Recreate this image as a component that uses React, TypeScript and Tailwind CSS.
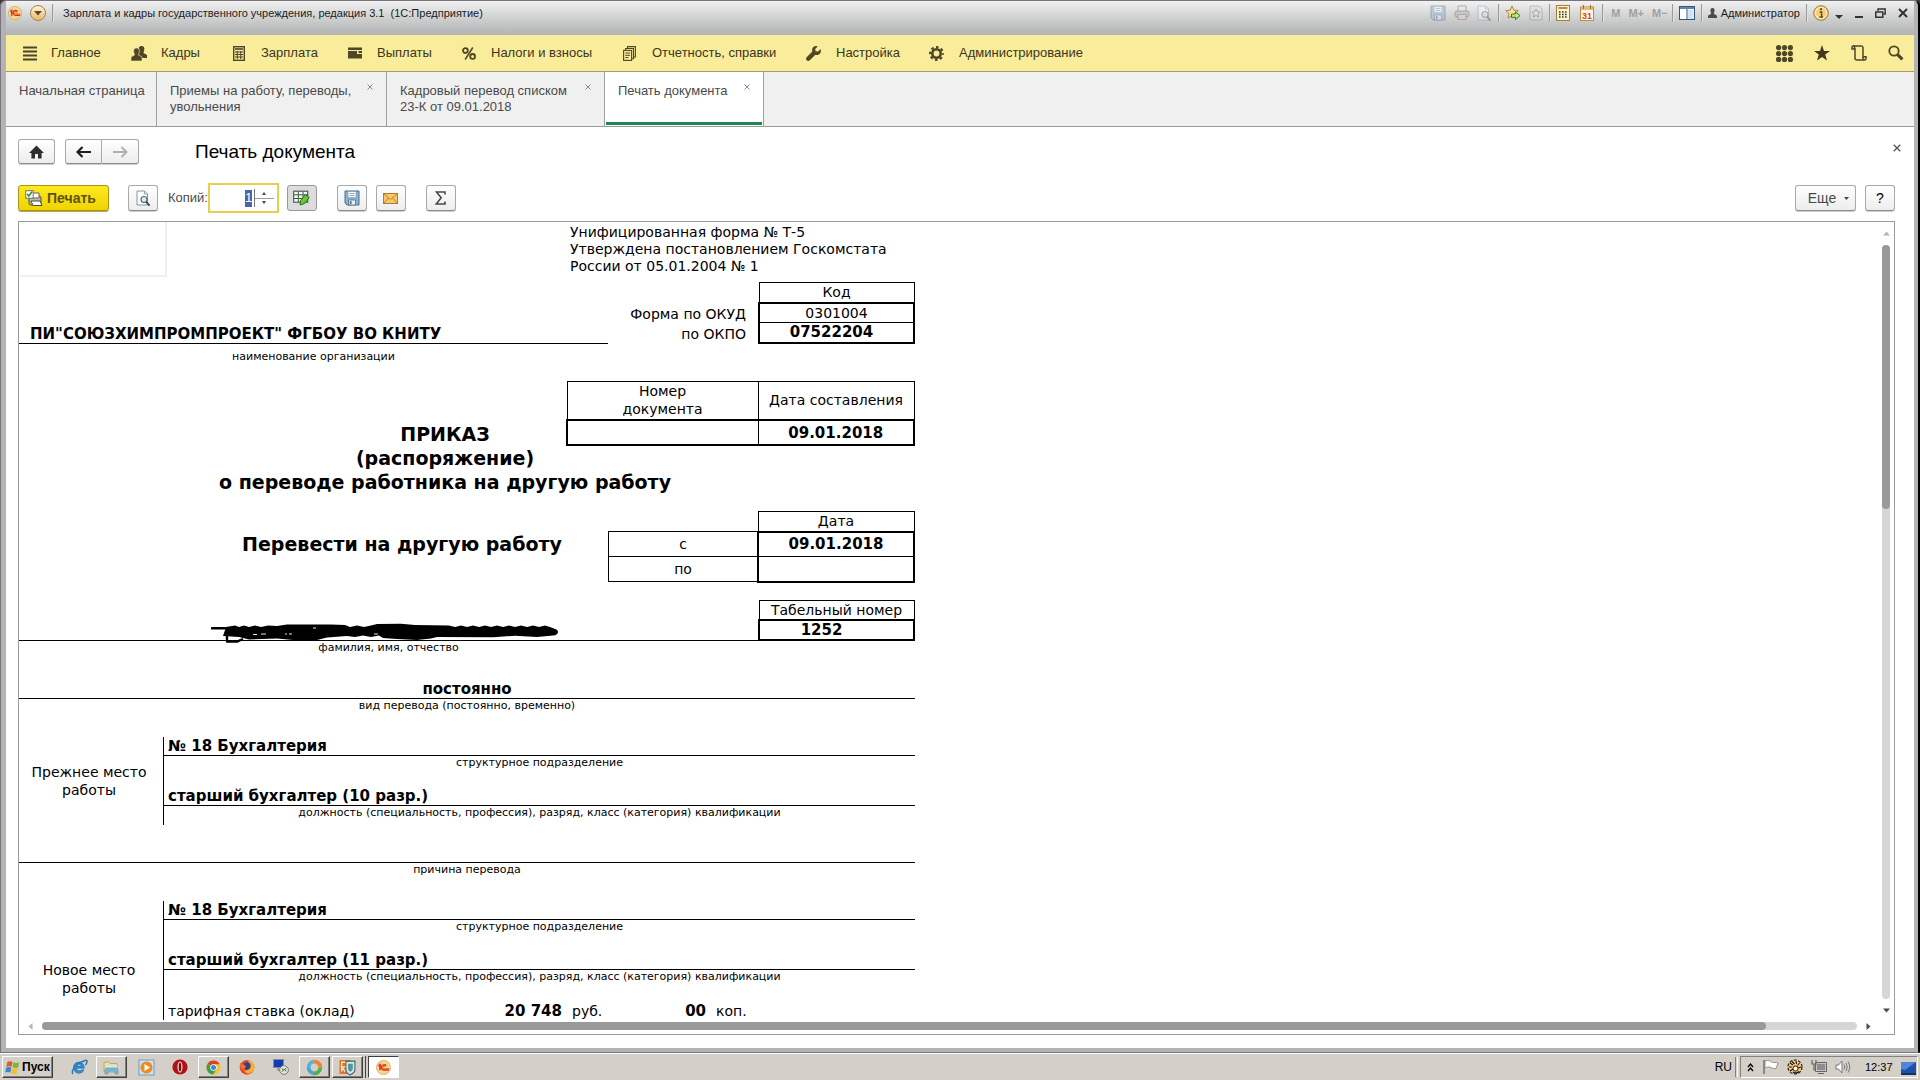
import React, { ReactNode } from "react";

const UI = "font-['Liberation_Sans',Arial,sans-serif]";
const DOC = "font-['DejaVu_Sans',Verdana,sans-serif]";

/* ---------- title bar ---------- */

function Logo1C({ size = 16 }: { size?: number }) {
  return (
    <svg width={size} height={size} viewBox="0 0 16 16" aria-hidden="true">
      <circle cx="8" cy="8" r="7.5" fill="#f8d68a" stroke="#c9a860" strokeWidth="0.8" />
      <path d="M2.600 6.400 L4.300 5.200 V11" stroke="#d2341c" strokeWidth="1.700" fill="none" />
      <path d="M10.800 6.400 A2.700 2.700 0 1 0 9 10.600 H14" stroke="#d2341c" strokeWidth="1.500" fill="none" />
      <path d="M9.800 7.600 A1.200 1.200 0 1 0 9 9.100 H14" stroke="#d2341c" strokeWidth="0.700" fill="none" />
    </svg>
  );
}

function Divider() {
  return <span className="h-[18px] w-px shrink-0 bg-[#9a9a9a] shadow-[1px_0_0_#e4e4e4]" />;
}

function FloppyIcon({ faded = false }: { faded?: boolean }) {
  return (
    <svg width="16" height="16" viewBox="0 0 16 16" opacity={faded ? 0.45 : 1} aria-hidden="true">
      <path d="M1 1 H15 V15 H3 L1 13 Z" fill="#8fb0cc" stroke="#4c6f90" />
      <rect x="4" y="1.5" width="8" height="6" fill="#fff" stroke="#7593ad" strokeWidth="0.6" />
      <path d="M5.5 3.5 H10.5 M5.5 5.5 H10.5" stroke="#6d93b5" strokeWidth="0.8" />
      <rect x="4.5" y="10" width="7" height="5" fill="#e9f0f4" stroke="#4c6f90" strokeWidth="0.8" />
      <rect x="5.8" y="11.2" width="1.8" height="3" fill="#4c6f90" />
    </svg>
  );
}

function PreviewIcon({ faded = false }: { faded?: boolean }) {
  return (
    <svg width="16" height="17" viewBox="0 0 16 17" opacity={faded ? 0.4 : 1} aria-hidden="true">
      <path d="M2 1 H9.5 L12.5 4 V15 H2 Z" fill="#fcfdfd" stroke="#7f98a6" />
      <path d="M9.5 1 V4 H12.5" fill="none" stroke="#7f98a6" strokeWidth="0.8" />
      <circle cx="9" cy="9.5" r="3" fill="#dceaf2" stroke="#56646c" strokeWidth="1.1" />
      <path d="M11.2 11.8 L14.6 15.6" stroke="#4a4a42" strokeWidth="2" />
    </svg>
  );
}

function TitleBar() {
  return (
    <header className="flex h-[34px] shrink-0 items-start bg-gradient-to-b from-[#f2f2f2] via-[#cfd0d0] to-[#b0b3b4] pt-0.5 text-[11px] text-[#1c1c1c]">
      <div className="flex h-5 w-full items-center pl-0.5 pr-1.5">
        <Logo1C size={14} />
        <button aria-label="Меню" className="ml-2 mr-1.5 flex size-4 items-center justify-center rounded-full border border-[#a8834a] bg-gradient-to-b from-[#fff3d5] to-[#e9b869]">
          <svg width="8" height="5" viewBox="0 0 8 5"><path d="M0 0 H8 L4 4.5 Z" fill="#5b4a32" /></svg>
        </button>
        <Divider />
        <h1 className="ml-2.5 whitespace-pre">Зарплата и кадры государственного учреждения, редакция 3.1  (1С:Предприятие)</h1>
        <div className="ml-auto flex items-center">
          <button aria-label="Сохранить" className="mr-2"><FloppyIcon faded /></button>
          <button aria-label="Печать" className="mr-1.5">
            <svg width="16" height="16" viewBox="0 0 16 16" opacity="0.45">
              <path d="M4 6 V1 H12 V6" fill="#eee" stroke="#666" />
              <rect x="1" y="6" width="14" height="6" rx="2" fill="#b5b5b5" stroke="#666" />
              <rect x="4" y="9.5" width="8" height="5" fill="#f1c9c9" stroke="#777" />
            </svg>
          </button>
          <button aria-label="Просмотр" className="mr-1.5"><PreviewIcon faded /></button>
          <Divider />
          <button aria-label="Добавить в избранное" className="ml-1.5 mr-2">
            <svg width="16" height="16" viewBox="0 0 16 16">
              <path d="M7 1 L8.8 5.2 L13.3 5.6 L9.9 8.6 L11 13 L7 10.7 L3 13 L4 8.6 L.7 5.6 L5.2 5.2 Z" fill="#f7e2a6" stroke="#b38538" />
              <path d="M6.5 9 H10.5 V6.8 L15 10.6 L10.5 14.6 V12.3 H6.5 Z" fill="#b9ea7e" stroke="#2f8017" />
            </svg>
          </button>
          <button aria-label="Избранное" className="mr-1.5">
            <svg width="14" height="16" viewBox="0 0 14 16" opacity="0.45">
              <path d="M1 1 H10 L13 4 V15 H1 Z" fill="#ddd" stroke="#888" />
              <path d="M7 4 L8.2 6.8 L11 7 L8.9 9 L9.5 12 L7 10.4 L4.5 12 L5.1 9 L3 7 L5.8 6.8 Z" fill="#f3f3f3" stroke="#666" />
            </svg>
          </button>
          <Divider />
          <button aria-label="Калькулятор" className="ml-1.5 mr-2.5">
            <svg width="14" height="16" viewBox="0 0 14 16">
              <rect x="0.5" y="0.5" width="13" height="15" fill="#fdf3cf" stroke="#a3803c" />
              <rect x="2.5" y="2" width="9" height="2" fill="#b98b3d" />
              <path d="M3 7 H11 M3 9.5 H11 M3 12 H11" stroke="#3d3420" strokeWidth="1.4" strokeDasharray="1.6 1.4" />
            </svg>
          </button>
          <button aria-label="Календарь" className="mr-2">
            <svg width="14" height="16" viewBox="0 0 14 16">
              <rect x="0.5" y="2" width="13" height="13.5" fill="#fff7e8" stroke="#bd8a4a" />
              <rect x="1" y="2" width="12" height="3" fill="#e9b978" />
              <path d="M3.5 0 V4 M10.5 0 V4" stroke="#9a6b33" />
              <text x="7" y="13.6" textAnchor="middle" fontSize="9" fontWeight="700" fill="#d14a1c" fontFamily="Liberation Sans">31</text>
            </svg>
          </button>
          <Divider />
          <span className="ml-2 mr-1 flex gap-2 font-bold text-[#a1a1a1]">
            <button>M</button><button>M+</button><button>M−</button>
          </span>
          <Divider />
          <button aria-label="Панели" className="mx-1.5">
            <svg width="16" height="14" viewBox="0 0 16 14">
              <rect x="0.5" y="0.5" width="15" height="13" fill="#fff" stroke="#33577c" />
              <rect x="1" y="1" width="14" height="2" fill="#5f86ae" />
              <path d="M8 3 V13" stroke="#33577c" />
              <rect x="9" y="4" width="5.5" height="9" fill="#d5e3f0" />
            </svg>
          </button>
          <Divider />
          <button className="ml-1.5 mr-1.5 flex items-center gap-1">
            <svg width="9" height="10" viewBox="0 0 10 11"><path d="M5 0 C7 0 7.600 1.500 7.200 3.500 C7 5 6.500 5.500 6.500 6.200 L10 8.500 V11 H0 V8.500 L3.500 6.200 C3.500 5.500 3 5 2.800 3.500 C2.400 1.500 3 0 5 0 Z" fill="#4b4b4b" /></svg>
            Администратор
          </button>
          <Divider />
          <button aria-label="Информация" className="ml-1.5 flex items-center gap-1.5">
            <svg width="16" height="16" viewBox="0 0 16 16">
              <circle cx="8" cy="8" r="7.3" fill="#f6cf79" stroke="#a07a3c" />
              <circle cx="8" cy="8" r="5.6" fill="none" stroke="#fdf0ce" />
              <path d="M6.6 7 H8.6 V12 M6.4 12 H10" stroke="#5b4a2a" strokeWidth="1.4" fill="none" />
              <circle cx="8" cy="4.2" r="1.1" fill="#5b4a2a" />
            </svg>
            <svg className="mt-2" width="8" height="4" viewBox="0 0 8 4"><path d="M0 0 H8 L4 4 Z" fill="#333" /></svg>
          </button>
          <span className="ml-1"><Divider /></span>
          <button aria-label="Свернуть" className="ml-2">
            <svg width="8" height="12" viewBox="0 0 8 12"><path d="M0 10 H8" stroke="#333" strokeWidth="2" /></svg>
          </button>
          <button aria-label="Восстановить" className="ml-3">
            <svg width="11" height="10" viewBox="0 0 11 10"><path d="M3 3 V1 H10.2 V6 H8.5" fill="none" stroke="#333" strokeWidth="1.4" /><path d="M0.8 4 H7.8 V9.2 H0.8 Z" fill="none" stroke="#333" strokeWidth="1.5" /></svg>
          </button>
          <button aria-label="Закрыть" className="ml-3">
            <svg width="10" height="10" viewBox="0 0 10 10"><path d="M1 1 L9 9 M9 1 L1 9" stroke="#333" strokeWidth="2" /></svg>
          </button>
        </div>
      </div>
    </header>
  );
}

/* ---------- section menu ---------- */

const INK = "#4d4726";

const sections: { label: string; width: string; gap: string; icon: ReactNode }[] = [
  {
    label: "Главное", width: "w-[108px]", gap: "gap-3.5",
    icon: <svg width="14" height="15" viewBox="0 0 14 15"><path d="M0 1.5 H14 M0 5.5 H14 M0 9.5 H14 M0 13.5 H14" stroke={INK} strokeWidth="2" /></svg>,
  },
  {
    label: "Кадры", width: "w-[102px]", gap: "gap-3.5",
    icon: (
      <svg width="16" height="15" viewBox="0 0 16 15">
        <path d="M10.5 0 C13 0 13.8 2 13.2 4.2 C13 5.5 12.5 6.2 12.5 7 L16 9 V12 H10 L7 8 C9 6 8 2 8 1 C9 .2 10 0 10.5 0 Z" fill={INK} />
        <path d="M5.5 2 C8 2 8.8 4 8.2 6.2 C8 7.5 7.5 8.2 7.5 9 L11 11 V15 H0 V11 L3.5 9 C3.5 8.2 3 7.5 2.8 6.2 C2.2 4 3 2 5.5 2 Z" fill={INK} stroke="#f9ec9b" strokeWidth="0.6" />
      </svg>
    ),
  },
  {
    label: "Зарплата", width: "w-[115px]", gap: "gap-4",
    icon: (
      <svg width="12" height="15" viewBox="0 0 12 15">
        <rect x="0.7" y="0.7" width="10.6" height="13.6" fill="none" stroke={INK} strokeWidth="1.4" />
        <path d="M2 3 H10" stroke={INK} strokeWidth="1.6" />
        <path d="M2 6 H10 M2 8.5 H10 M2 11 H10 M4.3 5 V13 M7.7 5 V13" stroke={INK} strokeWidth="1" />
      </svg>
    ),
  },
  {
    label: "Выплаты", width: "w-[114px]", gap: "gap-[15px]",
    icon: <svg width="14" height="12" viewBox="0 0 14 12"><path d="M0 0.5 H14 V3 H0 Z M0 4 H9 V7 H14 V11.5 H0 Z M10.5 4 H14 V6 H10.5 Z" fill={INK} /></svg>,
  },
  {
    label: "Налоги и взносы", width: "w-[161px]", gap: "gap-[15px]",
    icon: (
      <svg width="14" height="13" viewBox="0 0 14 13">
        <circle cx="3.4" cy="3.6" r="2.4" fill="none" stroke={INK} strokeWidth="1.8" />
        <circle cx="10.6" cy="9.4" r="2.4" fill="none" stroke={INK} strokeWidth="1.8" />
        <path d="M10.8 0.5 L3.2 12.5" stroke={INK} strokeWidth="1.5" />
      </svg>
    ),
  },
  {
    label: "Отчетность, справки", width: "w-[183px]", gap: "gap-4",
    icon: (
      <svg width="13" height="15" viewBox="0 0 13 15">
        <path d="M4.5 2.5 V0.6 H12.4 V11 H11 M2.6 4.4 V2.5 H10.5 V12.8 H9" fill="none" stroke={INK} strokeWidth="1.1" />
        <rect x="0.6" y="4.4" width="8" height="10" fill="none" stroke={INK} strokeWidth="1.1" />
        <path d="M2.3 7 H7 M2.3 9.3 H7 M2.3 11.6 H5.5" stroke={INK} />
      </svg>
    ),
  },
  {
    label: "Настройка", width: "w-[123px]", gap: "gap-[15px]",
    icon: <svg width="15" height="15" viewBox="0 0 15 15"><path d="M14.6 3.2 L12 5.6 L9.6 5.2 L9.2 3 L11.6 .4 C9.6 -.4 7.4 .4 6.5 2.2 C5.9 3.5 6 4.6 6.3 5.6 L.7 11.2 C-.2 12.1 -.2 13.5 .7 14.3 C1.6 15.2 3 15.1 3.8 14.3 L9.4 8.7 C10.9 9.2 12.7 8.9 13.8 7.7 C15 6.5 15.2 4.7 14.6 3.2 Z" fill={INK} /></svg>,
  },
  {
    label: "Администрирование", width: "w-[160px]", gap: "gap-[15px]",
    icon: (
      <svg width="15" height="15" viewBox="0 0 15 15">
        <circle cx="7.5" cy="7.5" r="4.2" fill="none" stroke={INK} strokeWidth="2.6" />
        <circle cx="7.5" cy="7.5" r="6.4" fill="none" stroke={INK} strokeWidth="2.2" strokeDasharray="2.6 2.43" strokeDashoffset="1.3" />
      </svg>
    ),
  },
];

function SectionMenu() {
  return (
    <nav className="flex h-[37px] shrink-0 items-center border-b border-[#a39d63] bg-[#f9ec9b] pl-[17px] pr-2.5 text-[13px] text-[#3b361e]">
      {sections.map((s) => (
        <a key={s.label} href="#" className={`${s.width} ${s.gap} flex shrink-0 items-center whitespace-nowrap`}>
          {s.icon}
          {s.label}
        </a>
      ))}
      <div className="ml-auto flex items-center gap-[21px]">
        <button aria-label="Все функции">
          <svg width="17" height="17" viewBox="0 0 17 17" fill={INK}>
            {[2.6, 8.5, 14.4].map((y) => [2.6, 8.5, 14.4].map((x) => <circle key={`${x}-${y}`} cx={x} cy={y} r="2.6" />))}
          </svg>
        </button>
        <button aria-label="Избранное">
          <svg width="16" height="16" viewBox="0 0 16 16"><path d="M8 0 L10 5.9 H16 L11.2 9.5 L13 15.6 L8 12 L3 15.6 L4.8 9.5 L0 5.9 H6 Z" fill="#40391c" /></svg>
        </button>
        <button aria-label="История">
          <svg width="16" height="16" viewBox="0 0 16 16" fill="none" stroke={INK} strokeWidth="1.5">
            <path d="M1 4 H3.6 V2.4 C3.6 .4 1 .4 1 2.4 Z M2.4 1 H10.5 C11.6 1 12 1.8 12 2.8 V11.8 H15 V13 C15 14.2 14.3 15 13.2 15 H6 C4.6 15 4 14.2 4 13 V3" />
            <path d="M12 11.8 V13.3 C12 14.2 12.5 15 13.3 15" />
          </svg>
        </button>
        <button aria-label="Поиск">
          <svg width="16" height="16" viewBox="0 0 16 16"><circle cx="6" cy="6" r="4.7" fill="none" stroke={INK} strokeWidth="1.8" /><path d="M9.4 9.4 L14.4 14.4" stroke={INK} strokeWidth="3" /></svg>
        </button>
      </div>
    </nav>
  );
}

/* ---------- tabs ---------- */

function Tab({ lines, width, active, closable = true }: { lines: string[]; width: string; active?: boolean; closable?: boolean }) {
  return (
    <div className={`${width} ${active ? "bg-white" : ""} flex shrink-0 flex-col border-r border-[#a0a0a0] px-px`}>
      <div className="flex flex-1 items-start justify-between pl-3 pr-3 pt-[11px]">
        <a href="#" className="whitespace-nowrap leading-4">
          {lines.map((l) => <span key={l} className="block">{l}</span>)}
        </a>
        {closable && (
          <button aria-label="Закрыть вкладку" className="py-px">
            <svg width="6" height="6" viewBox="0 0 6 6"><path d="M0.5 0.5 L5.5 5.5 M5.5 0.5 L0.5 5.5" stroke="#8c8c8c" /></svg>
          </button>
        )}
      </div>
      {active && <span className="mb-px h-[3px] bg-[#1f8552]" />}
    </div>
  );
}

function TabBar() {
  return (
    <div className="flex h-[55px] shrink-0 border-b border-[#9b9b9b] bg-[#f0f0f0] text-[13px] text-[#4a4a4a]">
      <Tab width="w-[151px]" lines={["Начальная страница"]} closable={false} />
      <Tab width="w-[230px]" lines={["Приемы на работу, переводы,", "увольнения"]} />
      <Tab width="w-[218px]" lines={["Кадровый перевод списком", "23-К от 09.01.2018"]} />
      <Tab width="w-[159px]" lines={["Печать документа"]} active />
    </div>
  );
}

/* ---------- page header and toolbar ---------- */

const BTN = "flex items-center justify-center rounded-[3px] border border-[#a9a9a9] border-b-[#8c8c8c] bg-gradient-to-b from-white to-[#ededed] shadow-[0_1px_0_#cfcfcf]";

function PageHeader() {
  return (
    <div className="flex items-center pl-3 pr-[13px] pt-3">
      <button aria-label="Домой" className={`${BTN} h-[25px] w-[37px]`}>
        <svg width="15" height="14" viewBox="0 0 15 14"><path d="M7.5 0.5 L15 8 H12.6 V13.5 H9 V9 H6 V13.5 H2.4 V8 H0 Z" fill="#2e2e2e" /></svg>
      </button>
      <div className="ml-2.5 flex">
        <button aria-label="Назад" className={`${BTN} h-[25px] w-[37px] rounded-r-none`}>
          <svg width="15" height="12" viewBox="0 0 15 12"><path d="M6.5 1 L1.5 6 L6.5 11 M2 6 H15" fill="none" stroke="#1d1d1d" strokeWidth="2.2" /></svg>
        </button>
        <button aria-label="Вперед" className={`${BTN} h-[25px] w-[37px] rounded-l-none border-l-0`}>
          <svg width="15" height="12" viewBox="0 0 15 12"><path d="M8.5 1 L13.5 6 L8.5 11 M13 6 H0" fill="none" stroke="#b0b0b0" strokeWidth="2" /></svg>
        </button>
      </div>
      <h2 className="ml-14 text-[19px] leading-6 text-black">Печать документа</h2>
      <button aria-label="Закрыть" className="mb-2 ml-auto">
        <svg width="8" height="8" viewBox="0 0 8 8"><path d="M0.7 0.7 L7.3 7.3 M7.3 0.7 L0.7 7.3" stroke="#555" strokeWidth="1.3" /></svg>
      </button>
    </div>
  );
}

function Toolbar() {
  return (
    <div className="mb-2 mt-[19px] flex h-[30px] items-center pl-3 pr-[19px] text-[13px] text-[#4a4a4a]">
      <button className="flex h-[26px] w-[91px] items-center gap-1 rounded-[3px] border border-[#a5931f] bg-gradient-to-b from-[#ffe81c] to-[#eed400] pl-1.5 text-[14px] font-bold text-[#5d5212] shadow-[0_1px_0_#b9a93c]">
        <svg width="18" height="17" viewBox="0 0 18 17" aria-hidden="true">
          <rect x="4" y="6" width="12" height="9" rx="2" fill="#bdb9aa" stroke="#4d4d42" />
          <path d="M7 3 H14 V8 H7 Z" fill="#fff" stroke="#66665a" />
          <path d="M6 11 H15 L17 15.5 H8 Z" fill="#fff" stroke="#4d4d42" />
          <rect x="0.7" y="0.7" width="7.500" height="7.500" fill="#fff" stroke="#66766a" />
          <path d="M2 4 L3.8 6 L7 1.8" fill="none" stroke="#2e8b2e" strokeWidth="1.5" />
        </svg>
        Печать
      </button>
      <button aria-label="Предварительный просмотр" className={`${BTN} ml-[19px] h-[26px] w-[30px]`}><PreviewIcon /></button>
      <label htmlFor="copies" className="ml-2.5">Копий:</label>
      <div className="flex h-[30px] w-[71px] border-2 border-[#e6cf4c] bg-white">
        <div className="flex flex-1 items-center justify-end">
          <input id="copies" defaultValue="1" className="h-[17px] w-[7px] bg-[#4a66a8] text-right text-[13px] text-white outline-none" />
        </div>
        <div className="my-1 ml-0.5 mr-[3px] flex w-5 flex-col border-l border-[#777]">
          <button aria-label="Больше" className="flex flex-1 items-center justify-center border-b border-[#999]"><svg width="4" height="3" viewBox="0 0 4 3"><path d="M0 3 L2 0 L4 3 Z" fill="#444" /></svg></button>
          <button aria-label="Меньше" className="flex flex-1 items-center justify-center"><svg width="4" height="3" viewBox="0 0 4 3"><path d="M0 0 L2 3 L4 0 Z" fill="#444" /></svg></button>
        </div>
      </div>
      <button aria-label="Редактирование" className="ml-2 flex h-[26px] w-[30px] items-center justify-center rounded-[3px] border border-[#999] bg-[#dcdcdc]">
        <svg width="17" height="16" viewBox="0 0 17 16">
          <rect x="0.7" y="1.2" width="14" height="11" fill="#f4faf4" stroke="#3c5a40" strokeWidth="1.1" />
          <path d="M1 4.8 H15 M1 8.5 H15 M5.3 1.5 V12 M10 1.5 V12" stroke="#3c5a40" />
          <path d="M7 14.800 L7.500 10.500 L12.500 4.500 L16.300 7.500 L11.200 13.800 Z" fill="#6cc63c" stroke="#2a6f1a" />
        </svg>
      </button>
      <button aria-label="Сохранить" className={`${BTN} ml-5 h-[26px] w-[30px]`}><FloppyIcon /></button>
      <button aria-label="Отправить по почте" className={`${BTN} ml-[9px] h-[26px] w-[30px]`}>
        <svg width="15" height="11" viewBox="0 0 15 11">
          <rect x="0.5" y="0.5" width="14" height="10" fill="#f8c866" stroke="#b5792a" />
          <path d="M1 1 L7.5 6.5 L14 1 M1 10 L5.5 5 M14 10 L9.5 5" fill="none" stroke="#b5792a" strokeWidth="0.9" />
        </svg>
      </button>
      <button aria-label="Сумма" className={`${BTN} ml-5 h-[26px] w-[30px]`}>
        <svg width="11" height="14" viewBox="0 0 11 14"><path d="M10 3.5 V1 H1.5 L6.2 6.8 L1.2 13 H10 V10.5" fill="none" stroke="#4a4a4a" strokeWidth="1.6" /></svg>
      </button>
      <button className={`${BTN} ml-auto h-[26px] w-[61px] gap-2 pl-1.5 text-[14px]`}>
        Еще
        <svg width="5" height="3" viewBox="0 0 5 3"><path d="M0 0 H5 L2.5 3 Z" fill="#444" /></svg>
      </button>
      <button className={`${BTN} ml-[9px] h-[26px] w-[30px] text-[14px] text-black`}>?</button>
    </div>
  );
}

/* ---------- printed form ---------- */

const BOX = "border border-black p-0 text-center align-middle leading-[18px]";
const HEAD = `${BOX} font-normal`;
const VALUE = `${BOX} text-[15px] font-bold`;
const CAPTION = "text-center text-[11px] leading-[14px]";

function CodeTable() {
  return (
    <table className="h-[61px] w-[157px] border-collapse">
      <thead><tr><th className={`${HEAD} h-5`}>Код</th></tr></thead>
      <tbody className="border-2 border-black">
        <tr><td className={`${HEAD} h-5`}>0301004</td></tr>
        <tr><td className={`${VALUE} h-5 pr-2.5`}>07522204</td></tr>
      </tbody>
    </table>
  );
}

function NumberTable() {
  return (
    <table className="h-[65px] w-[349px] border-collapse">
      <thead>
        <tr>
          <th className={`${HEAD} h-[39px]`}>Номер<br />документа</th>
          <th className={`${HEAD} w-[156px]`}>Дата составления</th>
        </tr>
      </thead>
      <tbody className="border-2 border-black">
        <tr>
          <td className={`${VALUE} h-[25px]`} />
          <td className={VALUE}>09.01.2018</td>
        </tr>
      </tbody>
    </table>
  );
}

function PeriodTable() {
  return (
    <table className="h-[70px] w-[307px] border-collapse">
      <thead>
        <tr>
          <td className="h-5 p-0" />
          <th className={`${HEAD} w-[156px]`}>Дата</th>
        </tr>
      </thead>
      <tbody>
        <tr>
          <th className={`${HEAD} h-[25px]`}>с</th>
          <td className={`${VALUE} border-x-2 border-t-2`}>09.01.2018</td>
        </tr>
        <tr>
          <th className={`${HEAD} h-[25px]`}>по</th>
          <td className={`${VALUE} border-x-2 border-b-2`} />
        </tr>
      </tbody>
    </table>
  );
}

function StaffNumberTable() {
  return (
    <table className="h-[41px] w-[157px] border-collapse">
      <thead><tr><th className={`${HEAD} h-5`}>Табельный номер</th></tr></thead>
      <tbody className="border-2 border-black">
        <tr><td className={`${VALUE} h-5 pr-[30px]`}>1252</td></tr>
      </tbody>
    </table>
  );
}

function Workplace({ title, unit, post, height, children }: { title: string[]; unit: string; post: string; height: string; children?: ReactNode }) {
  return (
    <section className={`${height} flex`}>
      <h3 className="flex w-[144px] flex-col justify-center pr-1 text-center leading-[18px]">
        {title.map((t) => <span key={t}>{t}</span>)}
      </h3>
      <div className="flex-1 border-l border-black">
        <p className="flex h-[19px] items-end border-b border-black pl-1 text-[15px] font-bold leading-[17px]">{unit}</p>
        <p className={`${CAPTION} h-6`}>структурное подразделение</p>
        <p className="flex h-[26px] items-end border-b border-black pl-1 text-[15px] font-bold leading-[17px]">{post}</p>
        <p className={CAPTION}>должность (специальность, профессия), разряд, класс (категория) квалификации</p>
        {children}
      </div>
    </section>
  );
}

function Scribble() {
  return (
    <svg className="-mb-1 ml-[192px]" width="350" height="21" viewBox="0 0 350 21" role="img" aria-label="Имя закрашено">
      <path d="M1 5.2 H14" stroke="#000" strokeWidth="2.6" strokeLinecap="round" />
      <path
        d="M12 13 L15 4 L24 2.5 L28 4 L33 2.5 L38 4 L44 2.5 L50 4 L57 2.4 L66 3 L76 1.6 L120 1.4 L134 2 L139 4 L146 2.6 L153 4 L160 2.6 L166 1 L190 .8 L204 2 L238 2.4 L244 4 L250 2.4 L256 4 L262 2.4 L268 4 L274 2.4 L280 4 L286 2.4 L292 4 L298 2.4 L304 4 L310 2.4 L316 4 L322 2.4 L328 4 L334 2.4 L339 4 L343 5.4 C349 7 348 12 342 12.6 L326 14 L304 12.8 L282 14.2 L226 14 L220 15.6 L206 17 L186 16 L172 15 L168 12.4 L160 14 L152 12.4 L144 14 L136 13 L116 14.5 L106 17 L82 17 L66 15.5 L38 16.4 L28 14 Z"
        fill="#000"
      />
      <path d="M16 13 V18.600 H26 L32 16" fill="none" stroke="#000" strokeWidth="2.400" strokeLinejoin="round" />
      <path d="M42 11.500 H46 M50 11 H55 M74 11 H76 M78 11 H81 M102 5 H105 M163 11 H167" stroke="#fff" strokeWidth="0.900" />
    </svg>
  );
}

function PrintedForm() {
  return (
    <article className={`${DOC} w-[896px] text-[14px] text-black`}>
      <div className="flex h-[60px]">
        <div className="h-[55px] w-[148px] border-b-2 border-r-2 border-[#efefef]" />
        <p className="ml-[403px] pt-0.5 leading-[17px]">
          Унифицированная форма № Т-5<br />Утверждена постановлением Госкомстата<br />России от 05.01.2004 № 1
        </p>
      </div>

      <div className="flex">
        <p className="flex w-[589px] items-end border-b border-black pl-[11px] text-[15px] font-bold leading-[18px]">
          ПИ"СОЮЗХИМПРОМПРОЕКТ" ФГБОУ ВО КНИТУ
        </p>
        <div className="flex flex-1 flex-col justify-end pr-3 text-right leading-5">
          <p>Форма по ОКУД</p>
          <p>по ОКПО</p>
        </div>
        <CodeTable />
      </div>
      <p className={`${CAPTION} h-[37px] w-[589px] pt-1.5`}>наименование организации</p>

      <div className="flex">
        <div className="flex w-[547px] items-end pl-[305px]">
          <h2 className="flex-1 text-center text-[19px] font-bold leading-6">ПРИКАЗ</h2>
        </div>
        <NumberTable />
      </div>
      <h2 className="mb-[17px] w-[852px] text-center text-[19px] font-bold leading-6">
        (распоряжение)<br />о переводе работника на другую работу
      </h2>

      <div className="flex">
        <h2 className="w-[589px] pl-[177px] pt-5 text-center text-[19px] font-bold leading-[26px]">Перевести на другую работу</h2>
        <PeriodTable />
      </div>

      <div className="mt-[17px] flex">
        <div className="flex w-[739px] items-end border-b border-black"><Scribble /></div>
        <StaffNumberTable />
      </div>
      <p className={`${CAPTION} w-[739px]`}>фамилия, имя, отчество</p>

      <p className="mt-[25px] border-b border-black text-center text-[15px] font-bold leading-[18px]">постоянно</p>
      <p className={`${CAPTION} mb-6`}>вид перевода (постоянно, временно)</p>

      <Workplace title={["Прежнее место", "работы"]} unit="№ 18 Бухгалтерия" post="старший бухгалтер (10 разр.)" height="h-[88px]" />

      <div className="h-[38px] border-b border-black" />
      <p className={`${CAPTION} mb-6`}>причина перевода</p>

      <Workplace title={["Новое место", "работы"]} unit="№ 18 Бухгалтерия" post="старший бухгалтер (11 разр.)" height="h-[156px]">
        <div className="mt-4 flex items-baseline pl-1 leading-[22px]">
          <span className="w-[304px]">тарифная ставка (оклад)</span>
          <b className="w-[90px] text-right text-[15px]">20 748</b>
          <span className="ml-2.5 w-[103px]">руб.</span>
          <b className="w-[31px] text-right text-[15px]">00</b>
          <span className="ml-2.5">коп.</span>
        </div>
      </Workplace>
    </article>
  );
}

function Arrow({ d, dim }: { d: string; dim?: boolean }) {
  return <svg width="7" height="7" viewBox="0 0 7 7" className="shrink-0"><path d={d} fill={dim ? "#b5b5b5" : "#4a4a4a"} /></svg>;
}

function DocumentPanel() {
  return (
    <main className="mb-[13px] ml-3 mr-[19px] flex min-h-0 flex-1 flex-col border border-[#9c9c9c] bg-white">
      <div className="flex min-h-0 flex-1">
        <div className="min-h-0 flex-1 overflow-hidden"><PrintedForm /></div>
        <div className="flex w-3.5 flex-col items-center pb-1.5 pr-0.5 pt-2">
          <Arrow d="M0 5.5 L3.5 1.5 L7 5.5 Z" dim />
          <div className="my-2 w-2 flex-1 rounded-full bg-[#d6d6d6]"><div className="h-[35%] rounded-full bg-[#999]" /></div>
          <Arrow d="M0 1.5 L3.5 5.5 L7 1.5 Z" />
        </div>
      </div>
      <div className="flex h-3.5 items-center pb-0.5 pl-2 pr-[22px]">
        <Arrow d="M5.5 0 L1.5 3.5 L5.5 7 Z" dim />
        <div className="mx-2 h-2 flex-1 rounded-full bg-[#d6d6d6]"><div className="h-2 w-[95%] rounded-full bg-[#999]" /></div>
        <Arrow d="M1.5 0 L5.5 3.5 L1.5 7 Z" />
      </div>
    </main>
  );
}

/* ---------- taskbar ---------- */

const RAISED = "border border-b-[#404040] border-l-white border-r-[#404040] border-t-white bg-[#d4d0c8] shadow-[inset_-1px_-1px_0_#808080]";

function TaskItem({ label, children, kind = "flat", className = "" }: { label: string; children: ReactNode; kind?: "flat" | "raised"; className?: string }) {
  return (
    <button aria-label={label} className={`${kind === "raised" ? `${RAISED} w-[31px]` : "w-5"} ${className} flex h-[22px] shrink-0 items-center justify-center`}>
      {children}
    </button>
  );
}

function Taskbar() {
  return (
    <footer className="flex h-[27px] shrink-0 items-center border-t border-white bg-[#d4d0c8] pl-0.5 pr-0.5 text-[12px] text-black">
      <button className={`${RAISED} flex h-[22px] w-[51px] items-center gap-0.5 pl-0.5 font-bold`}>
        <svg width="15" height="15" viewBox="0 0 16 16" aria-hidden="true">
          <path d="M2.5 2 C4.5 1 6.3 1 8 2 L7 7.3 C5.2 6.3 3.3 6.3 1.4 7.2 Z" fill="#e2592a" />
          <path d="M8.9 2.4 C11 3.6 13 3.5 15.3 2.5 L14 8 C12 8.9 9.9 8.8 8 7.8 Z" fill="#79b83a" />
          <path d="M1.2 8.2 C3.1 7.3 5 7.4 6.8 8.3 L5.8 13.4 C4 12.5 2 12.5 0.2 13.3 Z" fill="#3d84cf" />
          <path d="M7.8 8.8 C9.8 9.8 11.9 9.8 13.9 8.9 L12.6 14.2 C10.6 15.1 8.6 15 6.7 13.9 Z" fill="#f3bf2c" />
        </svg>
        Пуск
      </button>
      <TaskItem label="Internet Explorer" className="ml-4">
        <svg width="17" height="16" viewBox="0 0 17 16">
          <path d="M13.300 9.200 H5.600 C6 12 9.500 12.400 10.600 10.700 H13 C11.300 16 2.500 15.400 2.500 8.400 C2.500 1.400 13.600 1 13.300 9.200 Z M5.600 7 H10.200 C9.800 4.600 6 4.600 5.600 7 Z" fill="#2f8fd6" stroke="#1c67a5" strokeWidth="0.500" fillRule="evenodd" />
          <path d="M2 14.8 C-.6 13 4 4 15 1.2 C17 1.2 16 4 14.5 6" fill="none" stroke="#2878b9" strokeWidth="1.4" />
        </svg>
      </TaskItem>
      <TaskItem label="Проводник" kind="raised" className="ml-[7px]">
        <svg width="17" height="15" viewBox="0 0 17 15">
          <path d="M1 2 H6 L7.5 3.5 H14 V12 H1 Z" fill="#f3dc8d" stroke="#bf9c42" strokeWidth="0.8" />
          <rect x="3" y="5" width="11" height="6" fill="#cfe9f5" />
          <path d="M2 14 V10 C2 8.5 3 8 4 8 H13 C14.5 8 15 9 15 10 V14 H12 V11 H5 V14 Z" fill="#77b9dd" stroke="#4d94ba" strokeWidth="0.6" />
        </svg>
      </TaskItem>
      <TaskItem label="Проигрыватель" className="ml-[9px]">
        <svg width="17" height="17" viewBox="0 0 17 17">
          <rect x="1" y="1" width="15" height="15" fill="#cde2f2" stroke="#6f9cc0" />
          <circle cx="8.5" cy="8.5" r="6" fill="#f08a1f" />
          <path d="M6.5 5 L12 8.5 L6.5 12 Z" fill="#fff" />
        </svg>
      </TaskItem>
      <TaskItem label="Opera" className="ml-3.5">
        <svg width="16" height="16" viewBox="0 0 16 16"><ellipse cx="8" cy="8" rx="7.6" ry="7.6" fill="#b01217" /><ellipse cx="8" cy="8" rx="2.5" ry="5.6" fill="#f6e9e6" /><ellipse cx="8" cy="8" rx="1.3" ry="4.6" fill="#86090d" /></svg>
      </TaskItem>
      <TaskItem label="Chrome" kind="raised" className="ml-2">
        <svg width="15" height="15" viewBox="0 0 16 16">
          <circle cx="8" cy="8" r="7.5" fill="#f4c62b" />
          <path d="M8 8 L1.5 4.2 A7.5 7.5 0 0 1 14.6 4.5 H8 Z" fill="#d8412f" />
          <path d="M8 8 L1.5 4.2 A7.5 7.5 0 0 0 7.6 15.5 L11 9.8 Z" fill="#3c9f4f" />
          <circle cx="8" cy="8" r="3.5" fill="#fff" /><circle cx="8" cy="8" r="2.7" fill="#4284e4" />
        </svg>
      </TaskItem>
      <TaskItem label="Firefox" className="ml-2">
        <svg width="16" height="16" viewBox="0 0 16 16">
          <circle cx="8" cy="8.4" r="7.3" fill="#e2452c" />
          <path d="M9 1 C14 2 16.5 7 15 11 C12 16 6 15 5 11 C9 13 12 9 9 1 Z" fill="#f9b02c" />
          <circle cx="8" cy="7" r="3.7" fill="#33418d" />
          <path d="M1 4 C3 5 5 5 7 7.4 C6 9 5 9.6 4.8 11 C2 10 .5 7 1 4 Z" fill="#f0742a" />
        </svg>
      </TaskItem>
      <TaskItem label="Удаленный рабочий стол" className="ml-3.5">
        <svg width="16" height="16" viewBox="0 0 16 16">
          <rect x="0.5" y="0.5" width="10" height="8" fill="#123ab5" stroke="#8b8b8b" />
          <path d="M5 9 V11.5 H9" stroke="#777" fill="none" />
          <circle cx="11" cy="11" r="4.4" fill="#dfe4da" stroke="#7d837a" /><path d="M8.8 9.6 L10.8 11 L8.8 12.6 M13.4 9 L11.4 10.6 L13.4 12" stroke="#2d6d2d" fill="none" />
        </svg>
      </TaskItem>
      <TaskItem label="Синхронизация" kind="raised" className="ml-2">
        <svg width="17" height="17" viewBox="0 0 16 16" fill="none" strokeWidth="3.600">
          <path d="M2.6 9 A5.6 5.6 0 0 1 7 2.5" stroke="#4fb5df" /><path d="M7 2.5 A5.6 5.6 0 0 1 13.6 8" stroke="#f0803a" /><path d="M13.5 8 A5.6 5.6 0 0 1 7 13.5" stroke="#55b04a" /><path d="M7.5 13.5 A5.6 5.6 0 0 1 2.5 8.5" stroke="#4aa6c9" />
        </svg>
      </TaskItem>
      <TaskItem label="Punto" kind="raised" className="ml-0.5">
        <svg width="17" height="17" viewBox="0 0 16 16">
          <path d="M0.500 1 H11 V14 H0.500 Z" fill="#e06f2c" /><path d="M2.500 12 V3 H5.500 C7.500 3 7.500 7.500 5.500 7.500 H2.500 L6 12" stroke="#fbe2c8" fill="none" strokeWidth="1.300" />
          <path d="M6.500 2 H15 V10 C15 13 12 14 10.500 15 C8.500 14 6.500 13 6.500 10 Z" fill="#d9e6ea" stroke="#3f646b" /><path d="M8.500 4.500 H13 V9 C13 11 10.500 12 10.500 12 C10.500 12 8.500 11 8.500 9 Z" fill="#4b9b8e" />
        </svg>
      </TaskItem>
      <span className="ml-px h-[22px] w-0.5 border-r border-[#404040] bg-[#d4d0c8]" />
      <button aria-label="1С:Предприятие" className="ml-0.5 flex h-[22px] w-[31px] items-center justify-center border border-b-white border-l-[#404040] border-r-white border-t-[#404040] bg-white"><Logo1C size={15} /></button>

      <span className="ml-auto">RU</span>
      <span className="ml-[3px] h-5 w-[3px] border-l border-r border-l-[#808080] border-r-white" />
      <div className="ml-0.5 flex h-[22px] w-[178px] items-center border border-b-white border-l-[#808080] border-r-white border-t-[#808080] pl-1.5">
        <button aria-label="Скрытые значки"><svg width="7" height="9" viewBox="0 0 7 9"><path d="M1 4 L3.500 1 L6 4 M1 8 L3.500 5 L6 8" fill="none" stroke="#000" strokeWidth="1.300" /></svg></button>
        <svg className="ml-2" width="17" height="16" viewBox="0 0 17 16" aria-label="Центр поддержки"><path d="M2 1 V15" stroke="#777" strokeWidth="1.600" /><path d="M3 2 C6 .5 8 2 9.500 3 C12 4 14 3 16 4 L14 9.500 C12 10 10 9 9 8.500 C7 7.500 5 8 3 9 Z" fill="#fff" stroke="#888" strokeWidth="0.900" /></svg>
        <svg className="ml-2" width="16" height="16" viewBox="0 0 16 16" aria-label="Агент">
          <circle cx="8" cy="8" r="7" fill="#f3cd8d" stroke="#2a1d0a" strokeWidth="1.200" strokeDasharray="3 1.500" />
          <path d="M3 4 L6 6 M5 2.500 L7.500 5 M9 2 L9.500 5 M12.500 4 L10.500 6.500 M2 8 H5 M3 12 L6 10 M14 8 L11 9" stroke="#1d1408" strokeWidth="1.100" />
          <circle cx="8.500" cy="9.500" r="2.600" fill="#fff5dc" stroke="#1d1408" /><path d="M6 13 C8 14.500 10 14.500 12 12.500" stroke="#1d1408" fill="none" strokeWidth="1.400" />
        </svg>
        <svg className="ml-2" width="16" height="16" viewBox="0 0 16 16" aria-label="Сеть"><rect x="5" y="4" width="10" height="8" fill="#8c8c8c" stroke="#f6f6f6" /><path d="M4.500 3.500 H15.500 V12.500 H4.500 Z M7 14.500 H13" fill="none" stroke="#666" /><path d="M1 1 V5 H5 V1 M3 5 V11 H5" fill="none" stroke="#666" strokeWidth="1.200" /></svg>
        <svg className="ml-2" width="16" height="14" viewBox="0 0 16 14" aria-label="Громкость"><path d="M1 5 H3.500 L7 1 V13 L3.500 9 H1 Z" fill="#fff" stroke="#777" /><path d="M9 4.500 Q10.500 7 9 9.500 M11 3 Q13.500 7 11 11 M13 1.500 Q16.500 7 13 12.500" fill="none" stroke="#777" /></svg>
        <time className="ml-3.5 text-[11px]">12:37</time>
        <button aria-label="Показать рабочий стол" className="ml-auto mr-px mt-0.5"><svg width="15" height="13" viewBox="0 0 15 13"><rect width="15" height="11" fill="#1f4fae" /><path d="M0 0 H15 L4 8 L0 7 Z" fill="#4f86d8" /><path d="M0 12 H15" stroke="#17305e" strokeWidth="2" /></svg></button>
      </div>
    </footer>
  );
}

export default function App() {
  return (
    <div className={`${UI} flex h-screen flex-col overflow-hidden bg-[#3c3c3c]`}>
      <div className="flex min-h-0 flex-1 flex-col rounded-t-md border-b border-l border-r-2 border-t border-[#77747a] border-r-black bg-[#b3b3b5] pl-[5px] pr-1">
        <TitleBar />
        <SectionMenu />
        <TabBar />
        <div className="flex min-h-0 flex-1 flex-col bg-white">
          <PageHeader />
          <Toolbar />
          <DocumentPanel />
        </div>
        <div className="h-1 shrink-0" />
      </div>
      <Taskbar />
    </div>
  );
}
